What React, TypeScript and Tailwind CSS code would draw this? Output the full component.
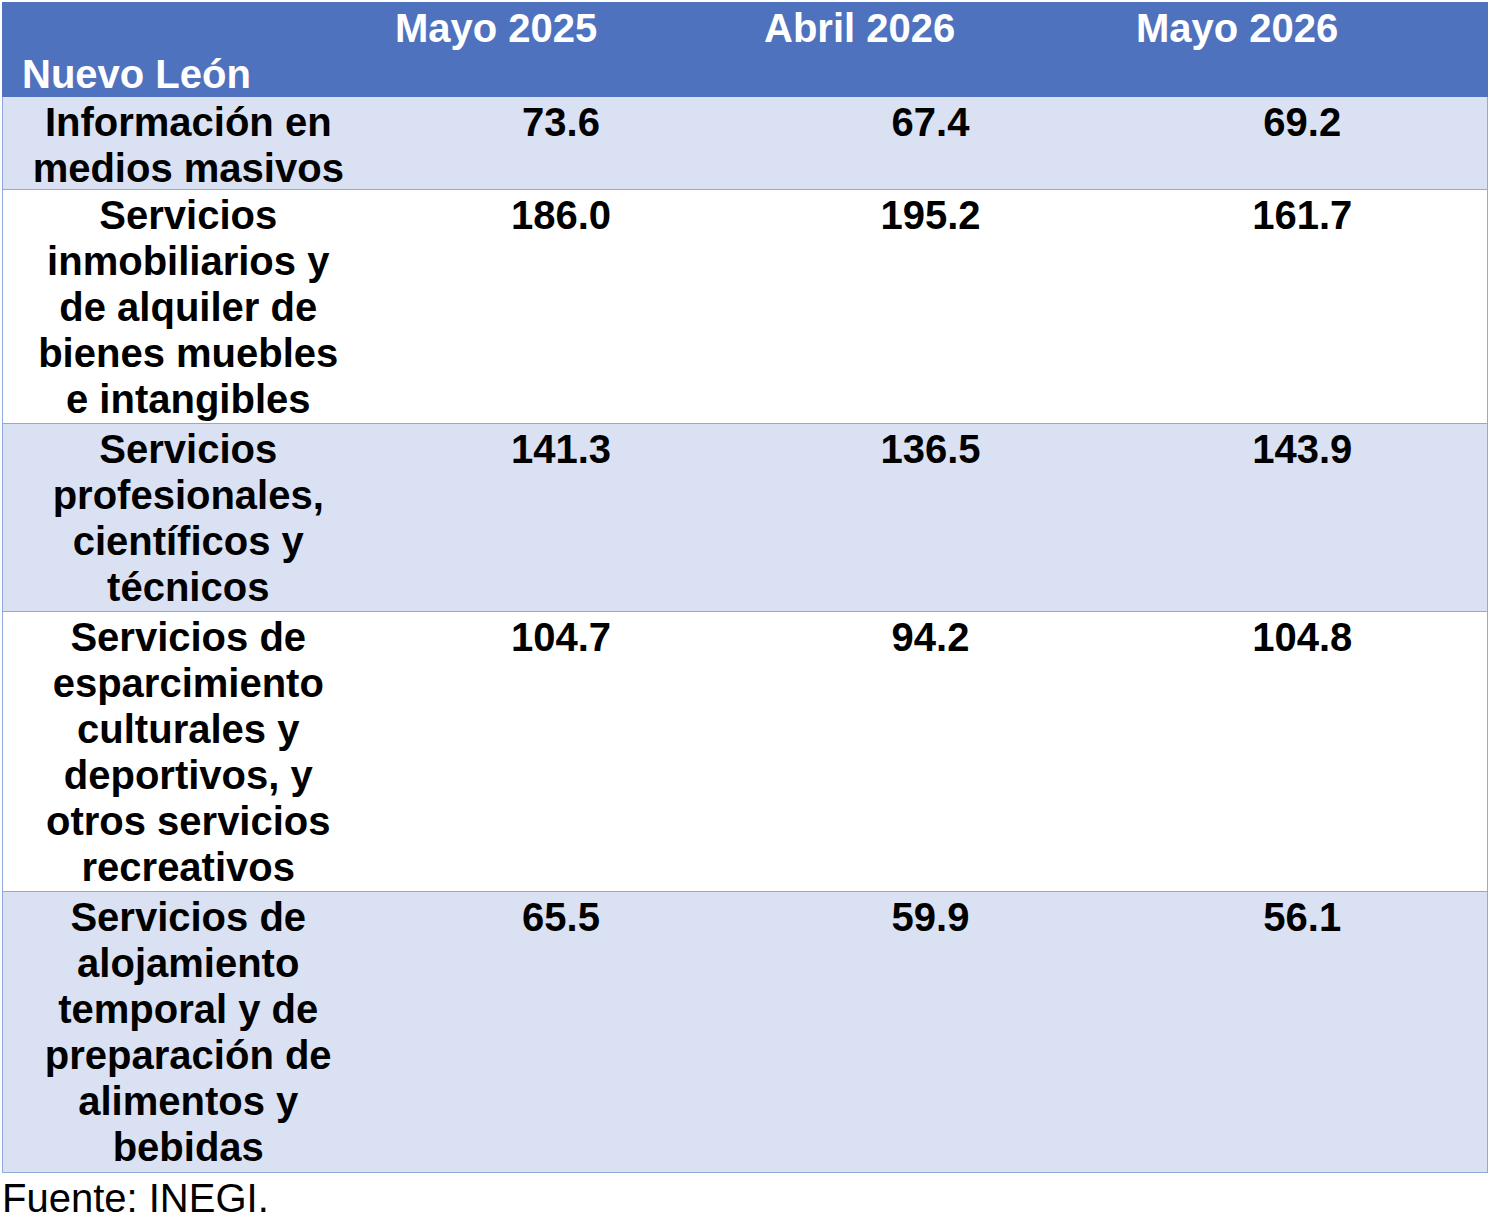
import React from "react";

type Row = { label: string[]; values: string[]; h: string };

const rows: Row[] = [
  { label: ["Información en", "medios masivos"], values: ["73.6", "67.4", "69.2"], h: "h-[93px]" },
  {
    label: ["Servicios", "inmobiliarios y", "de alquiler de", "bienes muebles", "e intangibles"],
    values: ["186.0", "195.2", "161.7"],
    h: "h-[234px]",
  },
  {
    label: ["Servicios", "profesionales,", "científicos y", "técnicos"],
    values: ["141.3", "136.5", "143.9"],
    h: "h-[188px]",
  },
  {
    label: ["Servicios de", "esparcimiento", "culturales y", "deportivos, y", "otros servicios", "recreativos"],
    values: ["104.7", "94.2", "104.8"],
    h: "h-[280px]",
  },
  {
    label: ["Servicios de", "alojamiento", "temporal y de", "preparación de", "alimentos y", "bebidas"],
    values: ["65.5", "59.9", "56.1"],
    h: "h-[281px]",
  },
];

export default function App() {
  return (
    <div
      className="bg-white pt-[2px] pl-[2px] text-[40px] leading-[46px] text-black"
      style={{ fontFamily: '"Liberation Sans", Arial, Helvetica, sans-serif' }}
    >
      <div className="w-[1486px] font-bold">
        <div className="grid grid-cols-[372px_370px_372px_1fr] h-[95px] bg-[#4F72BF] pt-[3px] text-white">
          <div className="pl-[20px]">
            <span className="block">&nbsp;</span>
            <span className="block">Nuevo León</span>
          </div>
          <div className="pl-[21px]">Mayo 2025</div>
          <div className="pl-[20px]">Abril 2026</div>
          <div className="pl-[20px]">Mayo 2026</div>
        </div>
        {rows.map((r, i) => (
          <div
            key={i}
            className={
              (i % 2 === 0 ? "bg-[#DAE1F2] " : "bg-white ") +
              r.h +
              " grid grid-cols-[370.5px_370px_372px_1fr] border-x-[1.5px] border-b-[1.5px] border-[#8EAADB] pt-[2px] box-border"
            }
          >
            <div className="text-center">
              {r.label.map((l, j) => (
                <span key={j} className="block">
                  {l}
                </span>
              ))}
            </div>
            <div className="text-center pl-[5px]">{r.values[0]}</div>
            <div className="text-center pl-[2px]">{r.values[1]}</div>
            <div className="text-center pl-[2px]">{r.values[2]}</div>
          </div>
        ))}
      </div>
      <div className="font-normal mt-[2px]">Fuente: INEGI.</div>
    </div>
  );
}
